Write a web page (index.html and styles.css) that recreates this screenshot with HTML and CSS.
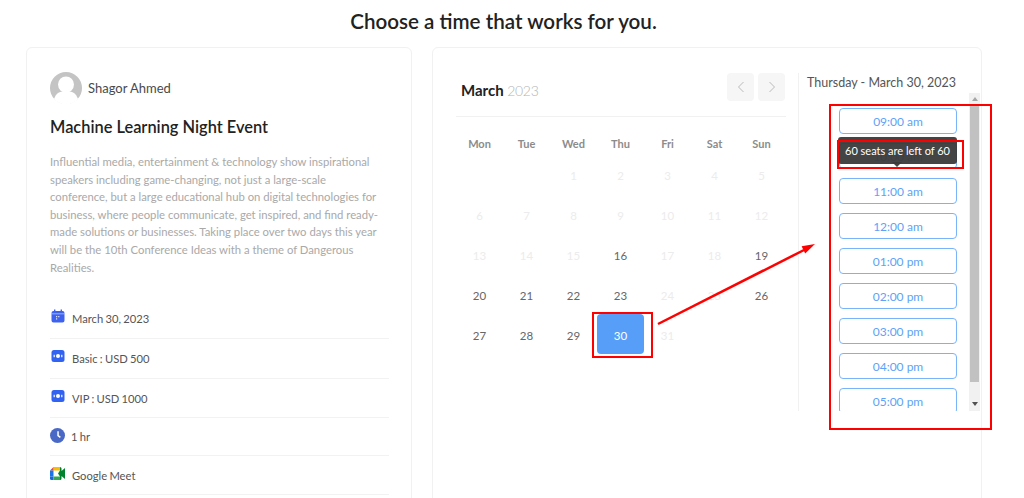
FILE: index.html
```html
<!DOCTYPE html>
<html lang="en">
<head>
<meta charset="utf-8">
<title>Choose a time</title>
<link rel="stylesheet" href="styles.css">
</head>
<body>
<h1 class="page-title">Choose a time that works for you.</h1>
<main class="layout">
  <section class="card info">
    <div class="host">
      <svg class="avatar" viewBox="0 0 32 32"><circle cx="16" cy="16" r="16" fill="#c4c4c4"/><circle cx="16" cy="12.500" r="8" fill="#fff"/><path d="M4 27c2-6 6-8 12-8s10 2 12 8a16 16 0 0 1-24 0z" fill="#fff"/></svg>
      <span class="host-name">Shagor Ahmed</span>
    </div>
    <h2 class="event-title">Machine Learning Night Event</h2>
    <p class="event-desc">Influential media, entertainment &amp; technology show inspirational speakers including game-changing, not just a large-scale conference, but a large educational hub on digital technologies for business, where people communicate, get inspired, and find ready-made solutions or businesses. Taking place over two days this year will be the 10th Conference Ideas with a theme of Dangerous Realities.</p>
    <ul class="facts">
      <li class="fact fact-a">
        <svg class="fact-icon" viewBox="0 0 14 14"><path d="M3 .5h1.400V2h5.200V.5H11V2h.5A2 2 0 0 1 13.500 4v7.500a2 2 0 0 1-2 2h-9a2 2 0 0 1-2-2V4a2 2 0 0 1 2-2H3z" fill="#3f62ee"/><path d="M.5 4.800h13" stroke="#fff" stroke-width=".5"/><path d="M5 7h1.200v1.200H5zM7.200 7h1.200v1.200H7.200zM5 9.200h1.200v1.200H5z" fill="#dfe5ff"/></svg>
        <span>March 30, 2023</span>
      </li>
      <li class="fact fact-b">
        <svg class="fact-icon" viewBox="0 0 14 14"><rect x=".5" y="1" width="13" height="12" rx="2.500" fill="#3262f2"/><circle cx="7" cy="7" r="2" fill="#fff"/><rect x="2.600" y="5.800" width="1.200" height="2.400" fill="#fff"/><rect x="10.200" y="5.800" width="1.200" height="2.400" fill="#fff"/></svg>
        <span>Basic : USD 500</span>
      </li>
      <li class="fact fact-c">
        <svg class="fact-icon" viewBox="0 0 14 14"><rect x=".5" y="1" width="13" height="12" rx="2.500" fill="#3262f2"/><circle cx="7" cy="7" r="2" fill="#fff"/><rect x="2.600" y="5.800" width="1.200" height="2.400" fill="#fff"/><rect x="10.200" y="5.800" width="1.200" height="2.400" fill="#fff"/></svg>
        <span>VIP : USD 1000</span>
      </li>
      <li class="fact fact-d">
        <svg class="fact-icon clock" viewBox="0 0 14 14"><circle cx="7" cy="7" r="7" fill="#4a68c6"/><path d="M7.500 3v4.200l2.200 1.600" stroke="#fff" stroke-width="1.400" fill="none"/></svg>
        <span>1 hr</span>
      </li>
      <li class="fact fact-e">
        <svg class="fact-icon meet" viewBox="0 0 15 13"><path d="M3.500 0H10v3.500H3.500z" fill="#fbbc04"/><path d="M3.500 0v3.500H0z" fill="#ea4335"/><path d="M0 3.500h3.500v6H0z" fill="#1a73e8"/><path d="M0 9.500h3.500V13H1.500A1.500 1.500 0 0 1 0 11.500z" fill="#1967d2"/><path d="M3.500 9.500H10V13H3.500z" fill="#34a853"/><path d="M10 0v3.500L8 6.500l2 3V13a1.500 1.500 0 0 0 1.500-1.500V9l3.500 3V1L11.500 4V1.500A1.500 1.500 0 0 0 10 0z" fill="#00832d"/></svg>
        <span>Google Meet</span>
      </li>
    </ul>
  </section>

  <section class="card booking">
    <div class="calendar">
      <header class="cal-head">
        <div class="cal-month"><strong>March</strong> <span>2023</span></div>
        <div class="cal-nav">
          <button class="nav-btn" type="button"><svg viewBox="0 0 10 14"><path d="M7.500 2 2.500 7l5 5" /></svg></button>
          <button class="nav-btn" type="button"><svg viewBox="0 0 10 14"><path d="m2.500 2 5 5-5 5" /></svg></button>
        </div>
      </header>
      <div class="weekdays"><span>Mon</span><span>Tue</span><span>Wed</span><span>Thu</span><span>Fri</span><span>Sat</span><span>Sun</span></div>
      <div class="dates">
        <span></span><span></span>
        <span class="off">1</span><span class="off">2</span><span class="off">3</span><span class="off">4</span><span class="off">5</span>
        <span class="off">6</span><span class="off">7</span><span class="off">8</span><span class="off">9</span><span class="off">10</span><span class="off">11</span><span class="off">12</span>
        <span class="off">13</span><span class="off">14</span><span class="off">15</span><span>16</span><span class="off">17</span><span class="off">18</span><span>19</span>
        <span>20</span><span>21</span><span>22</span><span>23</span><span class="off">24</span><span class="off">25</span><span>26</span>
        <span>27</span><span>28</span><span>29</span><span class="selected">30</span><span class="off">31</span>
      </div>
    </div>
    <aside class="slots">
      <h3 class="slots-title">Thursday - March 30, 2023</h3>
      <div class="slots-scroll">
        <div class="slots-list">
          <button class="slot" type="button">09:00 am</button>
          <div class="slot-wrap">
            <button class="slot" type="button">10:00 am</button>
            <div class="tooltip">60 seats are left of 60</div>
          </div>
          <button class="slot" type="button">11:00 am</button>
          <button class="slot" type="button">12:00 am</button>
          <button class="slot" type="button">01:00 pm</button>
          <button class="slot" type="button">02:00 pm</button>
          <button class="slot" type="button">03:00 pm</button>
          <button class="slot" type="button">04:00 pm</button>
          <button class="slot" type="button">05:00 pm</button>
        </div>
        <div class="scrollbar">
          <i class="arrow up"></i>
          <i class="thumb"></i>
          <i class="arrow down"></i>
        </div>
      </div>
    </aside>
  </section>
</main>

<div class="mark mark-day"></div>
<div class="mark mark-list"></div>
<div class="mark mark-tip"></div>
<svg class="mark-arrow" viewBox="0 0 170 90"><path d="M2 82 148 8" stroke="#f00" stroke-width="2.500" fill="none"/><path d="M159 2 145.600 4.300 149.200 11.500z" fill="#f00"/></svg>
</body>
</html>
```
FILE: styles.css
```css
* { box-sizing: border-box; }
html, body { margin: 0; height: 498px; overflow: hidden; background: #fff; }
body {
  font-family: "Lato", "Noto Sans", sans-serif;
  color: #444;
  position: relative;
}
.page-title {
  margin: 0;
  height: 47px;
  padding: 7px 17px 0 0;
  text-align: center;
  font-size: 20.600px;
  line-height: 28px;
  font-weight: 600;
  color: #222;
}
.layout {
  display: flex;
  gap: 20px;
  padding: 0 42px 0 26px;
}
.card {
  height: 480px;
  background: #fff;
  border: 1px solid #f1f1f1;
  border-radius: 6px;
}
.info { width: 386px; padding: 24px 22px 24px 23px; flex: none; }
.host { display: flex; align-items: center; gap: 6px; height: 32px; }
.avatar { width: 32px; height: 32px; }
.host-name { font-size: 13px; color: #4a4a4a; }
.event-title {
  margin: 11px 0 0;
  font-size: 16.400px;
  line-height: 24px;
  font-weight: 600;
  color: #222;
}
.event-desc {
  margin: 14px 8px 0 0;
  font-size: 11.300px;
  line-height: 17.6px;
  color: #a9a9a9;
}
.facts { list-style: none; margin: 23px 0 0; padding: 0; }
.fact {
  display: flex;
  align-items: center;
  gap: 7px;
  border-bottom: 1px solid #f2f2f2;
  font-size: 11.200px;
  word-spacing: -0.6px;
  color: #555;
  padding-left: 1px;
}
.fact-a { height: 40px; }
.fact-b { height: 40px; }
.fact-c { height: 39px; }
.fact-d { height: 38px; gap: 6px; padding-left: 0; }
.fact-e { height: 39px; padding-left: 0; gap: 7px; }
.fact-icon { width: 14px; height: 14px; flex: none; margin-top: -5px; }
.clock { width: 15px; height: 15px; margin-top: -2px; }
.meet { width: 15px; height: 13px; margin-top: -4px; }

.booking { width: 550px; flex: none; display: flex; padding: 25px 0 0 23px; }
.calendar { width: 330px; flex: none; }
.cal-head {
  display: flex;
  justify-content: space-between;
  align-items: flex-start;
  height: 44px;
  border-bottom: 1px solid #f1f1f1;
}
.cal-month { padding: 7px 0 0 5px; font-size: 14px; letter-spacing: -0.3px; line-height: 20px; font-weight: 300; color: #b5b5b5; }
.cal-month strong { font-size: 15px; letter-spacing: 0; font-weight: 700; color: #222; }
.cal-nav { display: flex; gap: 4px; padding-right: 1px; }
.nav-btn {
  width: 27px;
  height: 28px;
  padding: 0;
  border: 0;
  border-radius: 4px;
  background: #f6f6f6;
  display: flex;
  align-items: center;
  justify-content: center;
}
.nav-btn svg { width: 10px; height: 14px; fill: none; stroke: #bbb; stroke-width: 1; }
.weekdays, .dates { display: grid; grid-template-columns: repeat(7, 47px); text-align: center; }
.weekdays {
  margin-top: 15px;
  height: 22px;
  font-size: 11px;
  line-height: 24px;
  font-weight: 700;
  color: #8c8c8c;
}
.dates { grid-auto-rows: 40px; font-size: 11.500px; color: #666; }
.dates span { padding-top: 14px; line-height: 16px; }
.dates .off { color: #ececec; }
.dates .selected { background: #579ef9; color: #fff; border-radius: 4px; }

.slots {
  width: 183px;
  margin: 0 0 0 12px;
  border-left: 1px solid #f1f1f1;
  height: 338px;
  padding-left: 8px;
  display: flex;
  flex-direction: column;
}
.slots-title {
  margin: 0;
  height: 20px;
  font-size: 12.500px;
  line-height: 20px;
  font-weight: 400;
  color: #555;
  white-space: nowrap;
}
.slots-scroll { display: flex; height: 318px; overflow: hidden; }
.slots-list {
  flex: none;
  width: 162px;
  padding: 15px 0 0 32px;
  display: flex;
  flex-direction: column;
  gap: 9px;
}
.slot-wrap { position: relative; }
.slot {
  display: block;
  flex: none;
  width: 118px;
  height: 26px;
  padding: 0;
  border: 1px solid #79b4fb;
  border-radius: 4px;
  background: #fff;
  font: inherit;
  font-size: 12px;
  color: #5ea2f8;
}
.tooltip {
  position: absolute;
  left: -1px;
  top: -6px;
  width: 119px;
  height: 27px;
  background: rgba(58, 58, 58, 0.95);
  color: #fff;
  border-radius: 3px;
  font-size: 11px;
  line-height: 27px;
  text-align: center;
}
.tooltip::after {
  content: "";
  position: absolute;
  left: 54px;
  bottom: -3px;
  border: 5px solid transparent;
  border-bottom: 0;
  border-top-color: rgba(58, 58, 58, 0.95);
}
.scrollbar {
  flex: none;
  width: 11px;
  background: #f1f1f1;
  display: flex;
  flex-direction: column;
  align-items: center;
  justify-content: flex-start;
}
.scrollbar i { display: block; }
.arrow { width: 0; height: 0; border: 3px solid transparent; flex: none; }
.arrow.up { border-top: 0; border-bottom: 4px solid #a6a6a6; margin: 4px 0 5px; }
.arrow.down { border-bottom: 0; border-top: 4px solid #505050; margin-top: 20px; }
.thumb { width: 9px; height: 276px; background: #c1c1c1; flex: none; }

.mark { position: absolute; border: 2px solid #f00; }
.mark-day { left: 592px; top: 312px; width: 61px; height: 46px; }
.mark-list { left: 829px; top: 104px; width: 163px; height: 326px; }
.mark-tip { left: 837px; top: 140px; width: 127px; height: 29px; }
.mark-arrow { position: absolute; left: 656px; top: 242px; width: 170px; height: 90px; }
```
